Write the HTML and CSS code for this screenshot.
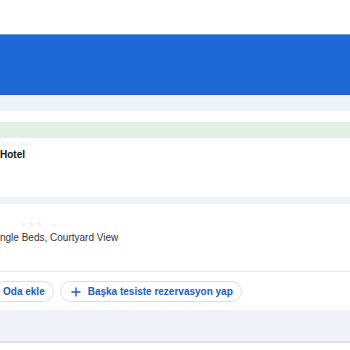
FILE: index.html
```html
<!DOCTYPE html>
<html lang="tr">
<head>
<meta charset="utf-8">
<link rel="stylesheet" href="styles.css">
</head>
<body>
<div class="page">
  <div class="top"></div>
  <header class="hero"></header>
  <nav class="subnav"></nav>
  <div class="gap"></div>
  <div class="notice"></div>
  <section class="hotel">
    <div class="faint">Tesis adı</div>
    <div class="hotel-name">Hotel</div>
  </section>
  <div class="divider"></div>
  <section class="room">
    <div class="stars">★★★ ···· ···</div>
    <div class="room-name">ngle Beds, Courtyard View</div>
  </section>
  <div class="actions">
    <button class="pill first">Oda ekle</button>
    <button class="pill"><svg class="plus" viewBox="0 0 10 10" width="10" height="10"><path d="M5 0.5V9.5M0.5 5H9.5" stroke="#1d5bc6" stroke-width="1.4" fill="none"/></svg>Başka tesiste rezervasyon yap</button>
  </div>
  <div class="footer"></div>
</div>
</body>
</html>
```

FILE: styles.css
```css
* { box-sizing: border-box; }
html, body { margin: 0; padding: 0; background: #fff; }
body { font-family: "Liberation Sans", Arial, sans-serif; }
.page { width: 350px; overflow: hidden; }
.top { height: 34px; background: #fff; }
.hero { height: 61px; background: #1f68d8; border-top: 1px solid #6f9de6; border-bottom: 1px solid #1c5fc8; }
.subnav { height: 16px; background: #eef2fb; }
.gap { height: 11px; }
.notice { height: 16px; background: #e1f0e3; }
.hotel { height: 59px; padding-top: 1px; }
.faint { font-size: 8px; line-height: 10px; color: #f2f2f2; }
.hotel-name { font-size: 10px; font-weight: bold; color: #111; line-height: 11px; }
.divider { height: 7px; background: #eef3fa; }
.room { height: 68px; border-bottom: 1px solid #e9e9e9; padding-top: 16px; }
.stars { font-size: 8px; line-height: 10px; color: #f7f1dc; letter-spacing: 1px; padding-left: 20px; }
.room-name { font-size: 10px; line-height: 14px; color: #333; margin-top: 1px; }
.actions { display: flex; gap: 6px; margin-left: -8px; padding-top: 9px; height: 38px; }
.pill { display: flex; align-items: center; gap: 7px; height: 21px; padding: 0 8px 0 10px; border: 1px solid #d9dde5; border-radius: 11px; background: #fff; font-family: "Liberation Sans", Arial, sans-serif; font-size: 10px; font-weight: bold; color: #1d5bc6; }
.pill .plus { flex: none; }
.footer { height: 33px; background: #eff2f9; border-bottom: 2px solid #dde0e7; }
```
